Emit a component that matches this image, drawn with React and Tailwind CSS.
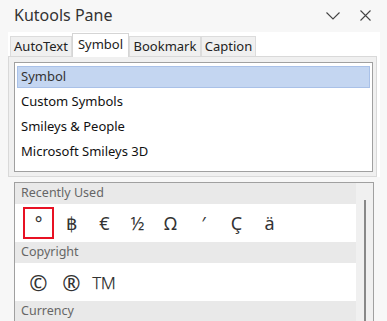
import React from 'react';

const LIST = ['Symbol', 'Custom Symbols', 'Smileys & People', 'Microsoft Smileys 3D'];
const TABS = [
  { name: 'AutoText', w: 'w-[62px]' },
  { name: 'Symbol', w: 'w-[57px]', active: true },
  { name: 'Bookmark', w: 'w-[72px]' },
  { name: 'Caption', w: 'w-[55px]' },
];
const SECTIONS = [
  { title: 'Recently Used', chars: ['°', '฿', '€', '½', 'Ω', '′', 'Ç', 'ä'] },
  { title: 'Copyright', chars: ['©', '®', '™'] },
  { title: 'Currency', chars: [] },
];

function Tab({ name, w, active }) {
  if (active) {
    return (
      <div className={'h-[24px] bg-white border border-b-0 border-[#d5d5d5] flex items-center justify-center text-[13px] text-[#222] relative top-[1px] ' + w}>
        <span className="-mt-[2px]">{name}</span>
      </div>
    );
  }
  return (
    <div className={'h-[20px] mt-[4px] bg-[#f0f0f0] border border-b-0 border-[#dcdcdc] flex items-center justify-center text-[13px] text-[#222] ' + w}>
      {name}
    </div>
  );
}

function Glyph({ c }) {
  // the copyright signs are drawn large in the pane's font
  if (c === '©' || c === '®') return <span className="text-[22px] leading-none">{c}</span>;
  if (c === '™') return <span className="text-[35px] font-extralight leading-none relative top-[6px]">{c}</span>;
  return c;
}

function SymbolRow({ chars, first }) {
  return (
    <div className="h-[38px] bg-white flex items-center pl-[7px]">
      {chars.map((c, i) => (
        <div key={i} className="w-[33px] h-full flex items-center justify-center text-[18px] text-[#333]">
          {i === 0 && first ? (
            <div className="w-[31px] h-[32px] border-2 border-[#e81123] flex items-center justify-center">{c}</div>
          ) : (
            <Glyph c={c} />
          )}
        </div>
      ))}
    </div>
  );
}

export default function App() {
  return (
    <div className="w-[387px] h-[321px] overflow-hidden bg-[#f7f7f7] text-[#222]" style={{ fontFamily: '"Noto Sans", "Open Sans", sans-serif' }}>
      {/* header */}
      <div className="h-[32px] flex items-center pl-[14px] pr-[16px]">
        <div className="text-[16px] text-[#333] flex-1 -mt-[2px]">Kutools Pane</div>
        <svg width="14" height="8" viewBox="0 0 14 8" className="mr-[20px] -mt-[1px]">
          <polyline points="0.5,0.5 7,7 13.5,0.5" fill="none" stroke="#444" strokeWidth="1.1" />
        </svg>
        <svg width="11" height="11" viewBox="0 0 11 11" className="-mt-[1px]">
          <path d="M0.5 0.5 L10.5 10.5 M10.5 0.5 L0.5 10.5" stroke="#444" strokeWidth="1.1" />
        </svg>
      </div>

      {/* tabs */}
      <div className="ml-[8px] w-[372px] bg-white">
        <div className="h-[24px] flex items-end pl-[2px]">
          {TABS.map((t) => (
            <Tab key={t.name} {...t} />
          ))}
        </div>
        <div className="w-[369px] bg-[#f0f0f0] border border-[#d9d9d9] pt-[5px] pl-[5px] pr-[3px] pb-[4px]">
          <div className="h-[110px] bg-white border border-[#a0a0a0] pt-[1px] px-[2px]">
            {LIST.map((item, i) => (
              <div key={item} className="h-[25px] flex items-center">
                <div className={'w-full h-[22px] flex items-center pl-[3px] text-[13px] ' + (i === 0 ? 'bg-[#c4d6f1] border border-[#a9c1e8] text-[#333]' : 'border border-transparent text-[#111]')}>
                  {item}
                </div>
              </div>
            ))}
          </div>
        </div>
      </div>

      {/* symbol box */}
      <div className="mt-[5px] ml-[14px] w-[360px] h-[150px] border border-[#a0a0a0] bg-white flex">
        <div className="flex-1">
          {SECTIONS.map((s, i) => (
            <div key={s.title}>
              <div className="h-[21px] bg-[#e9e9e9] flex items-center pl-[6px] text-[12.5px] text-[#666]">{s.title}</div>
              {s.chars.length > 0 && <SymbolRow chars={s.chars} first={i === 0} />}
            </div>
          ))}
        </div>
        <div className="w-[17px] bg-[#f0f0f0] pt-[17px] flex justify-center">
          <div className="w-[2px] h-full bg-[#888]" />
        </div>
      </div>
    </div>
  );
}
